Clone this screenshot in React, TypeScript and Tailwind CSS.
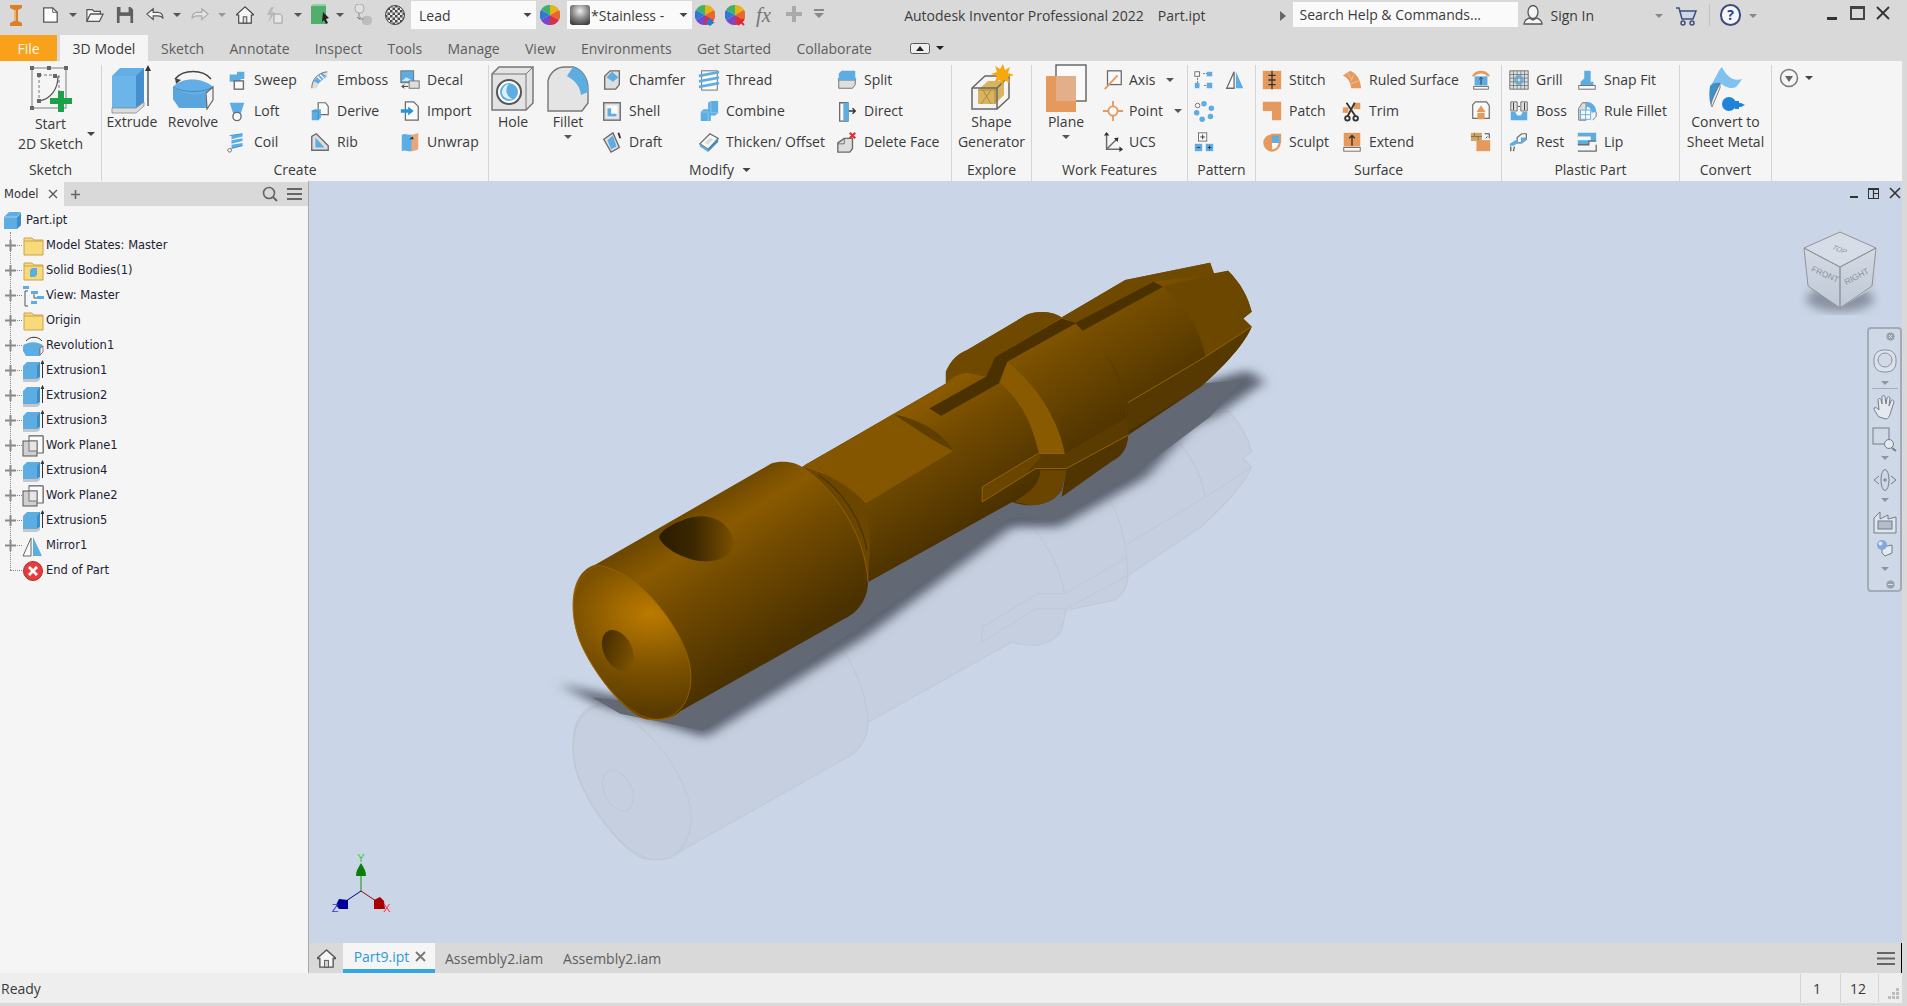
import React from 'react';

const B = '#5dade2', BD = '#3d8ec9', G = '#6b6b6b', LG = '#dedede', O = '#e5995c', W = '#fafafa', DK = '#333';

const ICONS: Record<string, React.ReactNode> = {
  sweep: <><path d="M4 6h8V3h8v8h-4v3H4z" fill={B} /><rect x="9" y="13" width="10" height="9" fill={W} stroke={G} strokeWidth="1.5" /></>,
  loft: <><path d="M4 3h16l-4 12H8z" fill={B} /><circle cx="12" cy="18" r="4.5" fill={W} stroke={G} strokeWidth="1.5" /></>,
  coil: <><path d="M6 5l12-2v3L6 9zM6 10l12-2v3L6 14zM6 15l12-2v3L6 19z" fill={B} /><path d="M4 5l14-2M6 19l12-3" stroke={BD} /><circle cx="4" cy="21" r="2" fill={W} stroke={G} /></>,
  emboss: <><path d="M3 21C3 11 10 4 20 3v6c-6 1-10 5-11 12z" fill={LG} /><path d="M5 13l9-9 5 4-9 8z" fill={B} /><path d="M9 8l4 4M12 6l4 4" stroke={W} strokeWidth="1.5" /><path d="M3 21C3 11 10 4 20 3" fill="none" stroke={G} /></>,
  derive: <><path d="M10 3h8l3 4v9H10z" fill={W} stroke={G} strokeWidth="1.3" /><path d="M3 12l3-2h7v9l-3 3H3z" fill={B} /><path d="M3 12h7v10" fill="none" stroke={BD} /></>,
  rib: <><path d="M3 21V6l5-3 13 13v5z" fill={LG} stroke={G} strokeWidth="1.5" /><path d="M7 18V7l10 11z" fill={B} /></>,
  decal: <><rect x="2" y="2" width="14" height="13" fill={B} stroke={G} /><path d="M3 13l5-4 7 4z" fill="#cfe7f7" /><rect x="11" y="13" width="11" height="8" fill={LG} stroke={G} /><path d="M3 19h7M6 17l-3 2 3 2" stroke={DK} fill="none" /></>,
  import: <><path d="M7 2h9l5 5v15H7z" fill={W} stroke={G} strokeWidth="1.4" /><path d="M2 10h8V7l6 5-6 5v-3H2z" fill="#2b93e0" /></>,
  unwrap: <><path d="M3 4c4-2 8 1 11 0v18c-4 1-7-2-11 0z" fill={B} /><path d="M14 4c2 0 5-1 7-2v18c-2 1-5 2-7 2z" fill="#e9a67a" /><path d="M11 9l4-3 1 3z" fill={DK} /></>,
  chamfer: <><path d="M4 8l6-6h10v15l-4 5H4z" fill={LG} stroke={G} strokeWidth="1.5" /><path d="M6 9l6-6 7 6-6 5z" fill={B} /></>,
  shell: <><rect x="3" y="3" width="18" height="19" fill={LG} stroke={G} strokeWidth="1.5" /><rect x="6" y="6" width="12" height="13" fill={W} /><path d="M7 9h4v6h6v3H7z" fill={B} /></>,
  draft: <><path d="M3 9l10-7 7 16-9 5z" fill={LG} stroke={G} strokeWidth="1.5" /><path d="M7 10l6-5 4 12-6 3z" fill={B} /><path d="M19 2l2 6" stroke={DK} strokeWidth="2" /></>,
  thread: <><rect x="4" y="2" width="17" height="21" fill={W} stroke={G} /><path d="M1 6l22-4v3L1 9zM1 12l22-4v3L1 15zM1 18l22-4v3L1 21z" fill={B} /></>,
  combine: <><path d="M3 13l3-3h5V3l3-2h8v13l-3 3h-5v6H3z" fill={B} /><path d="M14 1v13h8M3 13h8v10" fill="none" stroke="#8ccaf2" /></>,
  thicken: <><path d="M2 14L13 3l9 5-11 12z" fill={W} stroke={G} strokeWidth="1.4" /><path d="M2 14l9 6v3l-9-6z" fill={B} /><path d="M11 20L22 8v4L11 23z" fill={BD} /><path d="M7 13l6-6 4 2-6 6z" fill={LG} /></>,
  split: <><path d="M3 5l3-3h15v8H3z" fill={B} /><path d="M3 10h18v2H3z" fill={W} /><path d="M3 12h18v5l-3 4H3z" fill={LG} stroke={G} /><path d="M2 11h20" stroke={B} strokeWidth="2.5" /></>,
  direct: <><path d="M4 3h9v20H4z" fill={W} stroke={G} strokeWidth="1.4" /><path d="M8 3h6v20H8z" fill={B} /><path d="M14 12h6M18 9l3 3-3 3" stroke={DK} strokeWidth="1.5" fill="none" /></>,
  delete: <><path d="M2 13l7-5h9v11l-3 4H2z" fill={LG} stroke={G} strokeWidth="1.5" /><path d="M9 8v6H2" fill="none" stroke={G} /><path d="M15 2l6 6M21 2l-6 6" stroke="#e03030" strokeWidth="2.4" /></>,
  axis: <><rect x="6" y="2" width="15" height="15" fill={W} stroke={G} strokeWidth="1.4" /><path d="M3 22L17 7" stroke={O} strokeWidth="2" /></>,
  point: <><path d="M12 1v22M1 12h22" stroke={O} strokeWidth="2" /><circle cx="12" cy="12" r="5" fill={W} stroke={O} strokeWidth="2" /></>,
  ucs: <><path d="M5 3v17h16" fill="none" stroke={G} strokeWidth="1.6" /><path d="M5 20L16 9" stroke={G} strokeWidth="1.6" /><path d="M5 1l-3 4h6zM23 20l-4-3v6zM18 7l-5 1 4 4z" fill={DK} /></>,
  rectp: <><path d="M3 5h4M11 5h6M5 18h3M12 18h5M5 7v9" stroke={G} strokeDasharray="2 1" /><rect x="2" y="3" width="5" height="5" fill={W} stroke={G} /><rect x="15" y="3" width="6" height="5" fill={B} /><rect x="2" y="15" width="5" height="6" fill={B} /><rect x="15" y="15" width="6" height="6" fill={B} /></>,
  mirror: <><path d="M3 21L11 3v18z" fill={W} stroke={G} strokeWidth="1.4" /><path d="M13 3l8 18h-8z" fill={B} /></>,
  circp: <><circle cx="12" cy="4" r="3" fill={B} /><circle cx="20" cy="9" r="3" fill={B} /><circle cx="19" cy="18" r="3" fill={B} /><circle cx="10" cy="21" r="3" fill={B} /><circle cx="4" cy="14" r="3" fill={B} /><circle cx="5" cy="6" r="2.5" fill={W} stroke={G} /></>,
  skp: <><rect x="2" y="14" width="8" height="8" fill={B} /><rect x="14" y="14" width="8" height="8" fill={B} /><rect x="6" y="2" width="9" height="9" fill={W} stroke={G} /><path d="M8 6.500h5M10.500 4v5M4 18h4M18 16v4M16 18h4" stroke={DK} /></>,
  stitch: <><rect x="2" y="2" width="20" height="20" fill={O} /><path d="M12 2v20M8 7h8M8 12h8M8 17h8" stroke={DK} strokeWidth="1.4" /></>,
  patch: <><path d="M2 2h20v20H12V12H2z" fill={O} /></>,
  sculpt: <><circle cx="12" cy="13" r="9.500" fill={O} /><path d="M11 3h11v10H11z" fill={O} /><path d="M12 5h8v8h-8z" fill={B} /><path d="M12 13h7a7 7 0 0 1-7 7z" fill={W} /></>,
  ruled: <><path d="M2 7l8-5c7 3 11 9 12 19H11c0-6-3-11-9-14z" fill={O} /><path d="M7 4l5 8M14 6l-3 7M19 13l-8 3" stroke="#f2c5a0" /></>,
  trim: <><rect x="14" y="3" width="7" height="7" fill={O} /><rect x="2" y="8" width="6" height="6" fill={O} /><path d="M6 3l10 15M15 3L7 18" stroke={DK} strokeWidth="2" /><circle cx="7" cy="20" r="2.500" fill="none" stroke={DK} strokeWidth="2" /><circle cx="16" cy="20" r="2.500" fill="none" stroke={DK} strokeWidth="2" /></>,
  extend: <><rect x="3" y="2" width="18" height="15" fill={O} /><rect x="3" y="18" width="18" height="4" fill={W} stroke={G} /><path d="M12 16V6M9 8l3-3 3 3" stroke={DK} strokeWidth="1.5" fill="none" /></>,
  s1: <><path d="M2 8c2-4 6-6 10-6s8 2 10 6h-3c-2-2-4-3-7-3S7 6 5 8z" fill={O} /><rect x="5" y="8" width="14" height="10" fill={B} /><rect x="4" y="19" width="16" height="3" fill={W} stroke={G} /><path d="M12 17v-7M10 11l2-2 2 2" stroke={DK} fill="none" /></>,
  s2: <><path d="M3 5l3-3h12l3 4v14H3z" fill={W} stroke={G} strokeWidth="1.3" /><path d="M7 13l5-7 5 7z" fill={O} /><rect x="8" y="14" width="8" height="7" fill={O} /></>,
  s3: <><rect x="1" y="2" width="12" height="9" fill="#c9a86a" /><path d="M1 6h12M5 2v4M9 6v5" stroke="#8a6f3c" /><rect x="7" y="10" width="15" height="12" fill={O} /><path d="M16 3h5v5M19 6l-2 2" stroke={DK} fill="none" /></>,
  grill: <><rect x="2" y="2" width="20" height="20" fill={LG} stroke={G} /><path d="M6 2v20M10 2v20M14 2v20M18 2v20M2 6h20M2 10h20M2 14h20M2 18h20" stroke={G} strokeWidth=".8" /><circle cx="12" cy="12" r="4" fill="none" stroke={B} strokeWidth="2.500" /></>,
  boss: <><path d="M3 2h7v10H3zM14 2h7v10h-7z" fill={LG} stroke={G} /><path d="M6 3v8M18 3v8M11 7h2" stroke={DK} /><path d="M3 13h5l2 4h4l2-4h5v9H3z" fill={B} /></>,
  rest: <><path d="M10 7l5-4h5v6l-5 4h-5z" fill="none" stroke={G} strokeWidth="1.3" /><path d="M14 7h6v2l-4 4h-2z" fill={B} /><path d="M2 14l6-4h3v3l-5 3H2z" fill={B} /><path d="M3 17v5M7 17l-1 5" stroke={G} strokeWidth="1.500" /></>,
  snap: <><path d="M9 2h7v12h3v4H5v-4l4-4z" fill={B} /><rect x="3" y="18" width="18" height="4" fill={W} stroke={G} /></>,
  rulef: <><path d="M3 9l4-6h4v19H3z" fill={LG} stroke={G} /><path d="M11 2c6 0 11 4 11 11l-5 1c0-4-3-7-6-7z" fill={B} /><rect x="5" y="11" width="11" height="10" fill={W} stroke={B} /><path d="M5 16h11M10.500 11v10" stroke={B} /><path d="M22 13v5l-4 4" stroke={G} fill="none" /></>,
  lip: <><path d="M2 2h20v9h-8v4H2V2z" fill={B} /><path d="M2 6h14v4H2z" fill={W} /><path d="M2 15h12v-4h8M2 22h20v-7" stroke={G} strokeWidth="1.400" fill="none" /></>,
};

const Ic = ({ n, s = 22 }: { n: string; s?: number }) => (
  <svg width={s} height={s} viewBox="0 0 24 24" className="shrink-0">{ICONS[n]}</svg>
);

const Tri = ({ c = '#555', w = 8 }: { c?: string; w?: number }) => (
  <svg width={w} height="6" viewBox="0 0 8 6" className="shrink-0"><path d="M0 1h8L4 5z" fill={c} /></svg>
);

type Item = { i: string; t?: string; dd?: string };

const Col = ({ w, items, gap = 'gap-[6px]' }: { w: string; items: Item[]; gap?: string }) => (
  <div className={`-mt-[1px] flex flex-col shrink-0 ${w}`}>
    {items.map((it, k) => (
      <div key={k} className={`flex h-[31px] items-center whitespace-nowrap ${gap}`}>
        <Ic n={it.i} />
        {it.t && <span>{it.t}</span>}
        {it.dd && <span className={it.dd}><Tri /></span>}
      </div>
    ))}
  </div>
);

const Big = ({ w, icon, label, dd, iconBox = 'h-[47px]' }: { w: string; icon: React.ReactNode; label: React.ReactNode; dd?: boolean; iconBox?: string }) => (
  <div className={`flex flex-col items-center shrink-0 ${w}`}>
    <div className={`flex items-center justify-center ${iconBox}`}>{icon}</div>
    <div className="text-center leading-[20px] whitespace-nowrap">{label}</div>
    {dd && <div className="mt-[2px]"><Tri /></div>}
  </div>
);

const Group = ({ w, label, children, labelExtra }: { w: string; label: string; children: React.ReactNode; labelExtra?: React.ReactNode }) => (
  <div className={`flex flex-col shrink-0 border-r border-[#d4d4d4] ${w}`}>
    <div className="flex h-[95px]">{children}</div>
    <div className="flex h-[20px] items-center justify-center gap-[8px] leading-[20px]">{label}{labelExtra}</div>
  </div>
);

const ExtrudeIcon = () => (
  <svg width="44" height="50" viewBox="0 0 44 50">
    <path d="M2 12L10 4h24v34l-8 6H2z" fill="#63aee6" />
    <path d="M26 12l8-8v34l-8 6z" fill="#4590cc" />
    <path d="M2 12h24v32H2z" fill="#6cb5ea" />
    <path d="M2 44h24l8-6v4l-8 7H2z" fill="#dcdcdc" stroke="#888" strokeWidth=".8" />
    <path d="M38 42V5" stroke="#333" strokeWidth="1.2" />
    <path d="M38 1l-3 6h6z" fill="#333" />
  </svg>
);
const RevolveIcon = () => (
  <svg width="44" height="44" viewBox="0 0 44 44">
    <path d="M4 12C12 2 32 2 40 12" fill="none" stroke="#444" strokeWidth="1.300" />
    <path d="M4 11l1 6 5-4z" fill="#444" />
    <path d="M2 20C10 10 32 10 42 20v12l-6 9H8L2 32z" fill="#63aee6" />
    <path d="M2 20C12 26 32 26 42 20" fill="none" stroke="#3d8ec9" />
    <path d="M35 26l7-6v13l-6 9z" fill="#f3f3f3" stroke="#666" strokeWidth="1.200" />
    <path d="M2 32c3 4 5 7 8 9h24c1-3 1-10 1-15-10 3-24 2-33-6z" fill="#5aa5dd" />
  </svg>
);
const SketchIcon = () => (
  <svg width="44" height="50" viewBox="0 0 44 50">
    <rect x="3" y="3" width="34" height="40" fill="none" stroke="#999" strokeWidth="1.300" />
    <path d="M10 10v28M10 10h20v18" fill="none" stroke="#777" strokeDasharray="3 2" />
    <path d="M10 36C22 34 29 24 29 11" fill="none" stroke="#555" strokeWidth="1.200" />
    {[[3, 3], [37, 3], [3, 43], [20, 3], [10, 10], [26, 11], [10, 36]].map(([x, y], i) => <rect key={i} x={x - 2} y={y - 2} width="4" height="4" fill="#666" />)}
    <path d="M29 27h6v7h8v6h-8v8h-6v-8h-8v-6h8z" fill="#1aa14a" transform="translate(0,-1)" />
  </svg>
);
const HoleIcon = () => (
  <svg width="44" height="46" viewBox="0 0 44 46">
    <path d="M1 8l7-7h34v36l-7 7H1z" fill="#e3e3e3" stroke="#777" strokeWidth="1.500" />
    <path d="M1 8h34v36M35 8l7-7" fill="none" stroke="#777" />
    <circle cx="18" cy="26" r="12" fill="#fff" stroke="#555" strokeWidth="2" />
    <circle cx="18" cy="26" r="9" fill="#5dade2" />
    <path d="M11 26a8 8 0 0 1 7-8 9 9 0 0 0 4 15c-6 1-11-2-11-7z" fill="#dff0fb" />
  </svg>
);
const FilletIcon = () => (
  <svg width="42" height="46" viewBox="0 0 42 46">
    <path d="M1 15C3 6 10 1 18 1h8c8 2 15 10 15 22v14l-6 8H1z" fill="#e4e4e4" stroke="#777" strokeWidth="1.400" />
    <path d="M26 1c8 2 15 10 15 22v3l-7 3c-1-8-5-14-14-19z" fill="#5dade2" />
  </svg>
);
const ShapeIcon = () => (
  <svg width="46" height="50" viewBox="0 0 46 50">
    <path d="M3 24L16 12h24v22L28 45H3z" fill="#f4f4f4" stroke="#666" strokeWidth="1.500" />
    <path d="M9 26l10-9h16v14l-9 9H9z" fill="#d9b45c" />
    <path d="M9 26h17v14M26 26l9-9M14 26l8 14M22 26l-10 14" stroke="#a98a3f" fill="none" />
    <path d="M3 24h25v21M28 24l12-12" fill="none" stroke="#666" strokeWidth="1.500" />
    <path d="M34 0l2 6 5-3-2 6 6 2-6 2 2 6-6-3-2 5-2-5-5 2 2-6-6-2 6-2-2-6 5 3z" fill="#f5a90f" />
  </svg>
);
const PlaneIcon = () => (
  <svg width="42" height="50" viewBox="0 0 42 50">
    <rect x="11" y="1" width="30" height="36" fill="#fafafa" stroke="#555" strokeWidth="1.300" />
    <rect x="1" y="12" width="30" height="36" fill="#e5995c" />
    <rect x="11" y="12" width="20" height="25" fill="#e2af8a" />
  </svg>
);
const ConvertIcon = () => (
  <svg width="42" height="46" viewBox="0 0 42 46">
    <path d="M5 20C10 15 13 4 17 1c4 8 10 15 20 12-2 3-4 6-6 8-6 3-12-1-16-4z" fill="#7fc2f0" />
    <path d="M5 20c3-3 6-4 10-3 0 6-3 12-9 22-2-4-2-13-1-19z" fill="#3f8fcb" />
    <path d="M6 39c1-7 6-15 9-22v5L7 41z" fill="#eee" stroke="#666" strokeWidth=".8" />
    <circle cx="24" cy="38" r="7" fill="#1f84d9" />
    <path d="M30 35h4v2h2l4 2-4 2h-2v2h-4z" fill="#1f84d9" />
  </svg>
);

const T = ({ children, w = 18 }: { children: React.ReactNode; w?: number }) => (
  <svg width={w} height="20" viewBox="0 0 20 20" className="shrink-0">{children}</svg>
);
const Wheel = ({ mark }: { mark?: 'b' | 'x' }) => (
  <svg width="20" height="22" viewBox="0 0 20 22" className="shrink-0">
    <path d="M10 11V1a10 10 0 0 1 9 5z" fill="#e7b416" />
    <path d="M10 11l9-5a10 10 0 0 1 0 10z" fill="#e8682a" />
    <path d="M10 11l9 5a10 10 0 0 1-9 5z" fill="#d62f4a" />
    <path d="M10 11v10a10 10 0 0 1-9-5z" fill="#7a46c9" />
    <path d="M10 11l-9 5a10 10 0 0 1 0-10z" fill="#2f78d8" />
    <path d="M10 11L1 6a10 10 0 0 1 9-5z" fill="#3fb26a" />
    {mark === 'b' && <path d="M13 15h4v3h3l-5 4-5-4h3z" fill="#1c7fd1" />}
    {mark === 'x' && <path d="M13 15l6 6M19 15l-6 6" stroke="#e02a2a" strokeWidth="2" />}
  </svg>
);

const tree: [string, string][] = [
  ['folder', 'Model States: Master'],
  ['fcube', 'Solid Bodies(1)'],
  ['view', 'View: Master'],
  ['folder', 'Origin'],
  ['rev', 'Revolution1'],
  ['ext', 'Extrusion1'],
  ['ext', 'Extrusion2'],
  ['ext', 'Extrusion3'],
  ['wp', 'Work Plane1'],
  ['ext', 'Extrusion4'],
  ['wp', 'Work Plane2'],
  ['ext', 'Extrusion5'],
  ['mir', 'Mirror1'],
  ['end', 'End of Part'],
];

const TreeIcon = ({ k }: { k: string }) => {
  const box = (c: React.ReactNode) => <svg width="22" height="22" viewBox="0 0 22 22" className="shrink-0">{c}</svg>;
  if (k === 'folder' || k === 'fcube') return box(<>
    <path d="M2 3h8l2 2h9v15H2z" fill="#f9da7a" stroke="#c9a24e" />
    <path d="M2 6h19" stroke="#c9a24e" />
    {k === 'fcube' && <path d="M8 10l2-2h5v7l-2 2H8z" fill="#5dade2" />}
  </>);
  if (k === 'view') return box(<>
    <path d="M3 6v15h3M3 6h3" fill="none" stroke="#555" />
    <rect x="1" y="1" width="6" height="3" fill="#5dade2" /><rect x="9" y="6" width="7" height="3" fill="#5dade2" /><rect x="15" y="11" width="7" height="3" fill="#5dade2" /><rect x="9" y="16" width="6" height="3" fill="#5dade2" />
    <path d="M12 9v4h3" fill="none" stroke="#555" />
  </>);
  if (k === 'rev') return box(<>
    <path d="M4 6C8 1 16 1 20 6" fill="none" stroke="#333" />
    <path d="M1 11C5 6 17 6 21 11v5l-3 5H4l-3-5z" fill="#5dade2" />
    <path d="M18 13l3-2v6l-3 3z" fill="#eee" stroke="#555" strokeWidth=".7" />
  </>);
  if (k === 'ext') return box(<>
    <path d="M1 6l4-4h13v15l-3 2H1z" fill="#5dade2" />
    <path d="M15 6l3-4v15l-3 2z" fill="#3d8ec9" />
    <path d="M1 19h14l3-2v3l-3 2H1z" fill="#c7c7c7" />
    <path d="M20.500 18V3" stroke="#333" strokeWidth="1" /><path d="M20.500 0l-2 4h4z" fill="#333" />
  </>);
  if (k === 'wp') return box(<>
    <path d="M7 1h14v17" fill="none" stroke="#444" strokeWidth="1" /><rect x="7" y="1" width="14" height="17" fill="#fafafa" stroke="#666" />
    <rect x="1" y="6" width="14" height="15" fill="#cfcfcf" stroke="#555" />
    <rect x="7" y="6" width="8" height="10" fill="#e6e6e6" stroke="#777" />
  </>);
  if (k === 'mir') return box(<>
    <path d="M1 21l8-18v18z" fill="#fafafa" stroke="#666" /><path d="M11 2l9 19h-9z" fill="#5dade2" />
  </>);
  return box(<>
    <circle cx="11" cy="11" r="9.500" fill="#e43d3d" stroke="#b52a2a" />
    <path d="M7 7l8 8M15 7l-8 8" stroke="#fff" strokeWidth="2.800" />
  </>);
};

const SIL = 'M115,975 L490,670 C510,660 540,665 555,680 L860,430 L860,395 C870,365 880,345 905,330 L1030,225 C1050,212 1085,212 1105,232 L1240,120 L1420,68 L1428,100 L1458,92 C1485,130 1500,170 1508,215 L1490,235 L1508,260 C1490,320 1440,390 1400,440 L1246,585 C1245,620 1235,645 1215,660 L1115,690 L1105,750 C1095,775 1070,795 1040,795 C1025,795 1010,790 1000,785 L695,1025 C695,1080 670,1120 645,1135 L300,1410 C280,1435 255,1440 235,1437 C190,1440 120,1310 90,1220 C60,1130 60,1000 115,975 Z';

const PartDrawing = () => (
  <svg width="740" height="634" viewBox="0 0 1568 1900" preserveAspectRatio="none" className="absolute left-[231px] top-[59px]">
    <defs>
      <linearGradient id="cyl" gradientUnits="userSpaceOnUse" x1="300" y1="825" x2="591" y2="1151">
        <stop offset="0" stopColor="#6e4800" /><stop offset=".2" stopColor="#8a5a00" /><stop offset=".45" stopColor="#734b00" /><stop offset="1" stopColor="#4a3100" />
      </linearGradient>
      <linearGradient id="cylB" gradientUnits="userSpaceOnUse" x1="870" y1="200" x2="1200" y2="570">
        <stop offset="0" stopColor="#6e4800" /><stop offset=".3" stopColor="#8a5a00" /><stop offset=".55" stopColor="#744c00" /><stop offset="1" stopColor="#503500" />
      </linearGradient>
      <radialGradient id="face" gradientUnits="userSpaceOnUse" cx="235" cy="1120" r="300">
        <stop offset="0" stopColor="#bd7b00" /><stop offset=".55" stopColor="#7d5200" /><stop offset="1" stopColor="#583a00" />
      </radialGradient>
      <linearGradient id="hole" x1="0" x2="1" y1="0" y2="0">
        <stop offset="0" stopColor="#2b1c00" /><stop offset=".45" stopColor="#3a2600" /><stop offset="1" stopColor="#7a5000" />
      </linearGradient>
      <linearGradient id="hole2" x1="0" x2="1" y1="0" y2="1">
        <stop offset="0" stopColor="#3a2600" /><stop offset="1" stopColor="#8a5a00" />
      </linearGradient>
      <filter id="soft" x="-10%" y="-10%" width="120%" height="120%"><feGaussianBlur stdDeviation="14" /></filter>
    </defs>

    <g transform="translate(0,420)" fill="none" stroke="#c0c7d4" strokeWidth="2.500">
      <path d={SIL} fill="#c5cfdf" />
      <path d="M125,975 C60,1000 60,1130 90,1220 C120,1310 190,1440 250,1437 C310,1430 330,1340 315,1260 C300,1170 220,1000 125,975" />
      <ellipse cx="165" cy="1230" rx="30" ry="62" transform="rotate(-14 165 1230)" />
      <path d="M555,680 C620,740 690,880 695,1025" />
      <path d="M1160,270 C1210,340 1245,440 1245,590" />
      <path d="M990,365 C1050,430 1100,540 1112,640 L1245,530" />
      <path d="M937,740 L1055,640 L1112,640 M937,740 L937,785 L1050,685 L1115,685 L1246,585 M1245,490 L1410,350 L1508,260" />
      <path d="M1320,140 C1370,200 1400,270 1410,350" />
    </g>

    <path d="M40,1330 L300,1410 L640,1130 L695,1020 L1000,780 L1400,430 L1500,390 L1535,425 L1440,520 L1380,560 L1285,710 L1100,860 L1000,860 L690,1190 L350,1490 L120,1390 Z" fill="#5c6270" filter="url(#soft)" />
    <path d="M110,1370 L300,1400 L640,1120 L690,1010 L1000,770 L1400,430 L1490,420 L1420,530 L1260,700 L1090,840 L1000,830 L680,1160 L345,1470 L170,1420 Z" fill="#626874" />

    <path d={SIL} fill="url(#cyl)" />
    <path d="M555,680 L860,430 L975,430 L1040,530 L1058,640 L1060,690 L1050,735 L1000,785 L695,1025 C695,900 620,740 555,680 Z" fill="url(#cyl)" />
    <path d="M560,675 L750,522 L876,632 L690,790 C660,740 620,700 560,675 Z" fill="#845600" />
    <path d="M750,522 C810,540 855,580 876,632 C830,600 790,560 750,522 Z" fill="#5f3f00" />
    <path d="M555,680 C620,700 660,750 690,790 L700,900 L695,1025 C690,900 640,760 555,680 Z" fill="#6b4600" />
    <path d="M590,705 C635,745 680,830 693,930" fill="none" stroke="#4e3400" strokeWidth="3" />
    <path d="M555,680 C620,740 690,880 695,1025" fill="none" stroke="#9a6500" strokeWidth="2" />
    <path d="M860,430 L860,395 C870,365 880,345 905,330 L1030,225 C1050,212 1085,212 1105,232 L965,350 L945,410 L905,398 C885,400 870,415 860,430 Z" fill="#6f4900" />
    <path d="M990,365 L1135,250 C1200,330 1245,440 1246,585 L1115,690 L1112,640 C1100,540 1050,430 990,365 Z" fill="url(#cylB)" />
    <path d="M975,430 L990,365 C1050,430 1100,540 1112,640 L1057,640 C1045,560 1020,480 975,430 Z" fill="#8a5a00" />
    <path d="M1060,690 L1115,690 L1105,750 C1095,775 1070,795 1040,795 L1005,785 L1040,750 C1050,735 1060,715 1060,690 Z" fill="#6a4500" />
    <path d="M1115,690 L1246,585 C1245,620 1235,645 1215,660 L1105,770 Z" fill="#503500" />
    <path d="M1057,640 L1112,640 L1115,685 L1050,685 L1000,730 L937,785 L937,740 Z" fill="#6a4500" />
    <path d="M1055,640 L1112,640 L1245,530 L1245,585 L1115,685 L1050,685 L1030,700 L1062,650 Z" fill="#5a3c00" />
    <path d="M1057,640 L1112,640 M937,740 L1055,640 M937,740 L937,785 L1050,685 L1115,685 L1246,585" fill="none" stroke="#a26c08" strokeWidth="2" />
    <path d="M1160,270 C1210,340 1245,440 1246,585" fill="none" stroke="#5a3c00" strokeWidth="3" />
    <path d="M1150,270 L1320,140 C1370,200 1400,270 1410,350 L1245,488 C1240,420 1205,335 1150,270 Z" fill="url(#cylB)" />
    <path d="M1320,140 L1458,92 C1485,130 1500,170 1508,215 L1490,235 L1508,260 L1410,350 C1400,270 1370,200 1320,140 Z" fill="#6c4700" />
    <path d="M1245,490 L1410,352 L1508,260 C1490,320 1440,390 1400,440 L1246,575 Z" fill="#563900" />
    <path d="M1245,488 L1410,350 L1508,260" fill="none" stroke="#a26c08" strokeWidth="2" />
    <path d="M1105,232 L1240,120 L1420,68 L1428,100 L1300,125 L1135,248 Z" fill="#6f4900" />
    <path d="M825,505 L945,410 L965,350 L1105,235 L1135,248 L1300,125 L1320,140 L1150,272 L1135,250 L990,365 L972,430 L850,527 Z" fill="#4b3100" />
    <path d="M340,828 C380,825 410,870 410,905 C410,945 380,965 345,963 C310,960 260,925 252,890 C260,860 310,830 340,828 Z" fill="url(#hole)" />
    <path d="M125,975 C60,1000 60,1130 90,1220 C120,1310 190,1440 250,1437 C310,1430 330,1340 315,1260 C300,1170 220,1000 125,975 Z" fill="url(#face)" stroke="#9a6500" strokeWidth="2" />
    <ellipse cx="165" cy="1230" rx="31" ry="63" transform="rotate(-14 165 1230)" fill="url(#hole2)" />
    <path d="M115,975 C60,1000 60,1130 90,1220 C120,1310 190,1440 235,1437 C270,1440 285,1430 300,1410" fill="none" stroke="#9a6500" strokeWidth="2" />
  </svg>
);

const Cube = () => (
  <svg width="90" height="100" viewBox="0 0 90 100" className="absolute left-[1486px] top-[46px]">
    <defs>
      <linearGradient id="cf" x1="0" x2="0" y1="0" y2="1"><stop offset="0" stopColor="#d9dfe8" /><stop offset="1" stopColor="#bfc8d6" /></linearGradient>
      <filter id="cs"><feGaussianBlur stdDeviation="5" /></filter>
    </defs>
    <ellipse cx="45" cy="72" rx="34" ry="13" fill="#8a93a3" filter="url(#cs)" />
    <path d="M45 5L81 21V59L45 81L13 59L9 21Z" fill="url(#cf)" />
    <path d="M45 5L81 21L45 40L9 21Z" fill="#d7dde6" />
    <path d="M9 21L45 40V81L13 59ZM81 21L77 59L45 81V40Z" fill="none" stroke="#8f949c" />
    <path d="M45 5L81 21L45 40L9 21Z" fill="none" stroke="#8f949c" />
    <text x="45" y="25" textAnchor="middle" fontSize="7" fill="#8d939c" fontFamily="Liberation Sans" transform="rotate(22 45 22) skewX(-20)" dx="8">TOP</text>
    <text x="29" y="50" textAnchor="middle" fontSize="8.500" fill="#8d939c" fontFamily="Liberation Sans" transform="rotate(24 29 50)">FRONT</text>
    <text x="63" y="52" textAnchor="middle" fontSize="8.500" fill="#8d939c" fontFamily="Liberation Sans" transform="rotate(-28 63 52)">RIGHT</text>
  </svg>
);

const NavBar = () => (
  <div className="absolute left-[1558px] top-[146px] flex h-[265px] w-[35px] flex-col items-center rounded-[4px] border-2 border-[#a3abb8] bg-[#ced8e6]">
    <div className="mt-[1px] flex h-[12px] w-full items-center justify-end pr-[5px]">
      <svg width="9" height="9" viewBox="0 0 9 9"><circle cx="4.500" cy="4.500" r="4" fill="#9aa0aa" /><path d="M3 3l3 3M6 3L3 6" stroke="#dde" /></svg>
    </div>
    <svg width="24" height="24" viewBox="0 0 24 24" className="mt-[7px]"><rect x="1" y="1" width="22" height="22" rx="9" fill="#dbe2ec" stroke="#8c929c" /><circle cx="12" cy="11" r="7" fill="#d2dae6" stroke="#8c929c" /></svg>
    <div className="mt-[7px]"><Tri c="#8f959e" /></div>
    <div className="mt-[2px] h-px w-[26px] bg-[#a3abb8]" />
    <svg width="24" height="25" viewBox="0 0 24 25" className="mt-[6px]"><path d="M6 22C3 18 1 15 1 13c2-1 3 0 5 2L5 5c0-2 3-2 3 0l1 4V2c0-2 3-2 3 0l1 7 1-6c1-2 3-1 3 0l-1 8 2-5c1-2 3-1 3 1l-3 9c-1 5-3 8-5 8z" fill="#e4e9f0" stroke="#777d87" /></svg>
    <svg width="25" height="25" viewBox="0 0 25 25" className="mt-[7px]"><rect x="1" y="1" width="16" height="16" fill="none" stroke="#777d87" /><circle cx="17" cy="17" r="4.500" fill="#e4e9f0" stroke="#777d87" /><path d="M20 21l4 3" stroke="#777d87" strokeWidth="2" /></svg>
    <div className="mt-[3px]"><Tri c="#8f959e" /></div>
    <svg width="24" height="24" viewBox="0 0 24 24" className="mt-[7px]"><ellipse cx="12" cy="12" rx="4" ry="10.500" fill="none" stroke="#777d87" /><path d="M6 8l-5 4 5 4M18 8l5 4-5 4M10 12h4M12 10v4" fill="none" stroke="#777d87" /></svg>
    <div className="mt-[5px]"><Tri c="#8f959e" /></div>
    <svg width="24" height="24" viewBox="0 0 24 24" className="mt-[7px]"><path d="M1 8V23H23V7L15 9V5L7 9V2z" fill="#dfe5ee" stroke="#777d87" /><rect x="5" y="11" width="14" height="8" fill="#b5bcc8" stroke="#777d87" /></svg>
    <svg width="18" height="18" viewBox="0 0 18 18" className="mt-[5px]"><path d="M6 8l10-2v8l-7 3-3-3z" fill="#e4e9f0" stroke="#777d87" /><circle cx="6" cy="6" r="5" fill="#86a7dc" /><circle cx="4.500" cy="4.500" r="2" fill="#dbe7f8" /></svg>
    <div className="mt-[9px]"><Tri c="#8f959e" /></div>
    <div className="mt-[8px] flex w-full justify-end pr-[5px]">
      <svg width="9" height="9" viewBox="0 0 9 9"><circle cx="4.500" cy="4.500" r="4" fill="#9aa0aa" /><path d="M2 4.500h5" stroke="#dde" /></svg>
    </div>
  </div>
);

const Triad = () => (
  <svg width="66" height="68" viewBox="0 -6 66 68" className="absolute left-[21px] top-[668px]">
    <path d="M31 36V12" stroke="#0a9a0a" />
    <path d="M31 8c-3 5-5 8-5 13h10c0-5-2-8-5-13z" fill="#0a7d0a" />
    <path d="M31 36L13 48" stroke="#000080" />
    <path d="M9 44l9 1 0 9H9l-3-4z" fill="#000098" />
    <path d="M31 36l15 10" stroke="#a00000" />
    <path d="M44 45l6-3 4 4 1 8H44z" fill="#a80000" />
    <text x="31" y="7" textAnchor="middle" fontSize="11" fill="#2fd02f" fontFamily="Liberation Sans">Y</text>
    <text x="5" y="57" textAnchor="middle" fontSize="11" fill="#3a3ae0" fontFamily="Liberation Sans">Z</text>
    <text x="57" y="57" textAnchor="middle" fontSize="11" fill="#f03a4a" fontFamily="Liberation Sans">X</text>
  </svg>
);

export default function App() {
  return (
    <div className="relative flex h-[1006px] w-[1907px] flex-col overflow-hidden bg-[#d9d9d9] font-['Open_Sans',sans-serif] text-[14px] text-[#3a3a3a]">
      <div className="flex h-[35px] shrink-0 items-start whitespace-nowrap">
        <div className="ml-[10px] mt-[5px]"><svg width="12" height="21" viewBox="0 0 12 21"><path d="M0 0h12v3L8 5v11l4 2v3H0v-3l4-2V5L0 3z" fill="#d9812c" /><path d="M4 5h2v11H4z" fill="#f2b267" /></svg></div>
        <div className="ml-[19px] mt-[5px]"><T><path d="M3 2h10l5 5v11H3z" fill="#fdfdfd" stroke="#555" strokeWidth="1.400" /><path d="M13 2v5h5" fill="none" stroke="#555" /></T></div>
        <div className="ml-[10px] mt-[12px]"><Tri /></div>
        <div className="ml-[9px] mt-[5px]"><T><path d="M1 4h6l2 2h7v3H5L1 17z" fill="#f5f5f5" stroke="#555" strokeWidth="1.300" /><path d="M5 9h14l-4 8H1z" fill="#f5f5f5" stroke="#555" strokeWidth="1.300" /></T></div>
        <div className="ml-[12px] mt-[5px]"><T><path d="M1 1h15l3 3v15H1z" fill="#5f5f5f" /><rect x="5" y="1" width="9" height="6" fill="#d9d9d9" /><rect x="4" y="11" width="12" height="8" fill="#d9d9d9" /></T></div>
        <div className="ml-[12px] mt-[5px]"><T><path d="M8 3L1 9l7 6v-4h5c3 0 5 1 6 3 0-5-3-7-6-7H8z" fill="#f3f3f3" stroke="#555" strokeWidth="1.300" /></T></div>
        <div className="ml-[9px] mt-[12px]"><Tri /></div>
        <div className="ml-[10px] mt-[5px]"><T><path d="M12 3l7 6-7 6v-4H7c-3 0-5 1-6 3 0-5 3-7 6-7h5z" fill="#e4e4e4" stroke="#aaa" strokeWidth="1.300" /></T></div>
        <div className="ml-[9px] mt-[12px]"><Tri c="#999" /></div>
        <div className="ml-[10px] mt-[5px]"><T><path d="M10 1L0 10h3v9h14v-9h3z" fill="#f5f5f5" stroke="#444" strokeWidth="1.300" /><rect x="8" y="12" width="4" height="7" fill="#d9d9d9" stroke="#444" /></T></div>
        <div className="ml-[11px] mt-[5px]"><T><path d="M7 1L2 10h4l-2 8 7-11H7l3-6z" fill="#b9b9b9" /><path d="M10 9h7l2 2v8h-9z" fill="#e6e6e6" stroke="#999" /></T></div>
        <div className="ml-[11px] mt-[12px]"><Tri /></div>
        <div className="ml-[8px] mt-[5px]"><svg width="20" height="23" viewBox="0 0 20 23" className="-mt-[2px]"><path d="M1 3h15v18H1z" fill="#53ae6b" /><path d="M1 3h15V1H3z" fill="#8ed39f" /><path d="M13 9l6 6-3 1 2 4-2 1-2-4-2 2z" fill="#222" /></svg></div>
        <div className="ml-[6px] mt-[12px]"><Tri /></div>
        <div className="ml-[10px] mt-[4px]"><svg width="18" height="22" viewBox="0 0 18 22"><rect x="1" y="0" width="9" height="9" rx="4" fill="#e0e0e0" stroke="#aaa" /><rect x="8" y="12" width="10" height="9" rx="4" fill="#bdbdbd" /><path d="M5 9v6h5M3 13l2 2 2-2" stroke="#888" fill="none" /></svg></div>
        <div className="ml-[13px] mt-[5px]"><svg width="20" height="20" viewBox="0 0 20 20"><defs><pattern id="chk" width="5" height="5" patternUnits="userSpaceOnUse"><rect width="5" height="5" fill="#e8e8e8" /><rect width="2.500" height="2.500" fill="#4a4a4a" /><rect x="2.500" y="2.500" width="2.500" height="2.500" fill="#4a4a4a" /></pattern></defs><circle cx="10" cy="10" r="9.500" fill="url(#chk)" stroke="#444" /></svg></div>
        <div className="ml-[6px] mt-[1px] flex h-[28px] w-[125px] items-center justify-between bg-[#fafafa] pl-[8px] pr-[4px]"><span>Lead</span><Tri c="#444" w={9} /></div>
        <div className="ml-[4px] mt-[4px]"><Wheel /></div>
        <div className="ml-[7px] mt-[1px] flex h-[28px] w-[125px] items-center justify-between bg-[#fafafa] pl-[3px] pr-[4px]">
          <span className="flex items-center gap-[1px]"><svg width="20" height="20" viewBox="0 0 20 20"><defs><radialGradient id="met" cx=".5" cy=".3" r=".8"><stop offset="0" stopColor="#eee" /><stop offset=".5" stopColor="#888" /><stop offset="1" stopColor="#333" /></radialGradient></defs><rect width="20" height="20" rx="3" fill="url(#met)" /></svg>*Stainless -</span>
          <Tri c="#444" w={9} />
        </div>
        <div className="ml-[3px] mt-[4px]"><Wheel mark="b" /></div>
        <div className="ml-[10px] mt-[4px]"><Wheel mark="x" /></div>
        <div className="ml-[11px] mt-[1px] font-['Liberation_Serif',serif] text-[21px] italic leading-[28px] text-[#777]">fx</div>
        <div className="ml-[15px] mt-[6px]"><svg width="16" height="16" viewBox="0 0 16 16"><path d="M6 0h4v6h6v4h-6v6H6v-6H0V6h6z" fill="#aaa" /></svg></div>
        <div className="ml-[12px] mt-[8px]"><svg width="10" height="10" viewBox="0 0 10 10"><path d="M0 1h10v2H0zM0 5h10L5 10z" fill="#888" /></svg></div>
        <div className="ml-[80px] mt-[5px] text-[#3c3c3c]">Autodesk Inventor Professional 2022</div>
        <div className="ml-[14px] mt-[5px] text-[#3c3c3c]">Part.ipt</div>
        <div className="ml-[75px] mt-[11px]"><svg width="6" height="10" viewBox="0 0 6 10"><path d="M0 0l6 5-6 5z" fill="#666" /></svg></div>
        <div className="ml-[7px] mt-[2px] flex h-[25px] w-[225px] items-center bg-[#fafafa] pl-[6px]">Search Help &amp; Commands...</div>
        <div className="ml-[5px] mt-[5px]"><svg width="20" height="20" viewBox="0 0 20 20"><ellipse cx="10" cy="7" rx="5" ry="6.500" fill="#f4f4f4" stroke="#555" strokeWidth="1.300" /><path d="M6 13c-2 1-5 2-5 6h18c0-4-3-5-5-6l-4 2z" fill="#f4f4f4" stroke="#555" strokeWidth="1.300" /></svg></div>
        <div className="ml-[7px] mt-[5px]">Sign In</div>
        <div className="ml-[61px] mt-[13px]"><Tri c="#888" /></div>
        <div className="ml-[12px] mt-[5px]"><svg width="22" height="22" viewBox="0 0 22 22"><path d="M1 3h3l3 11h11l3-8H5" fill="#cfd6e8" stroke="#3f4f7a" strokeWidth="1.500" /><circle cx="8" cy="18" r="2" fill="none" stroke="#3f4f7a" strokeWidth="1.500" /><circle cx="17" cy="18" r="2" fill="none" stroke="#3f4f7a" strokeWidth="1.500" /></svg></div>
        <div className="ml-[12px] mt-[4px] h-[22px] w-px bg-[#c2c2c2]" />
        <div className="ml-[10px] mt-[4px] flex h-[22px] w-[21px] items-center justify-center rounded-full border-2 border-[#3a4a7a] bg-[#f4f6fb] text-[14px] font-bold leading-none text-[#27408b]">?</div>
        <div className="ml-[8px] mt-[13px]"><Tri c="#888" /></div>
        <div className="ml-[70px] mt-[17px] h-[3px] w-[10px] bg-[#333]" />
        <div className="ml-[13px] mt-[6px] h-[14px] w-[15px] border-2 border-t-[3px] border-[#444]" />
        <div className="ml-[11px] mt-[6px]"><svg width="14" height="14" viewBox="0 0 14 14"><path d="M1 1l12 12M13 1L1 13" stroke="#333" strokeWidth="1.800" /></svg></div>
      </div>

      <div className="flex h-[26px] shrink-0 items-stretch whitespace-nowrap">
        <div className="flex w-[57px] items-center justify-center bg-[#f9a11b] text-[#fff8ea]">File</div>
        <div className="ml-[3px] flex w-[88px] items-center justify-center bg-[#f5f5f5]">3D Model</div>
        <div className="ml-[13px] flex items-center gap-[25.300px] text-[#5d5d5d]">
          <span>Sketch</span><span>Annotate</span><span>Inspect</span><span>Tools</span><span>Manage</span><span>View</span><span>Environments</span><span>Get Started</span><span>Collaborate</span>
        </div>
        <div className="ml-[38px] flex items-center gap-[6px]">
          <svg width="20" height="11" viewBox="0 0 20 11"><rect x=".5" y=".5" width="19" height="10" rx="2" fill="#efefef" stroke="#555" /><path d="M6 8l4-5 4 5z" fill="#222" /></svg>
          <Tri c="#222" />
        </div>
      </div>

      <div className="flex h-[120px] w-[1902px] shrink-0 bg-[#f5f5f5] pt-[4px] text-[#3a3a3a]">
        <Group w="w-[102px]" label="Sketch">
          <div className="relative w-full">
            <Big w="w-full" iconBox="h-[49px]" icon={<SketchIcon />} label={<>Start<br />2D Sketch</>} />
            <div className="absolute left-[87px] top-[66px]"><Tri c="#444" /></div>
          </div>
        </Group>
        <Group w="w-[387px]" label="Create">
          <Big w="w-[60px]" icon={<ExtrudeIcon />} label="Extrude" />
          <Big w="w-[62px]" icon={<RevolveIcon />} label="Revolve" />
          <div className="ml-[2px] flex">
            <Col w="w-[83px]" items={[{ i: 'sweep', t: 'Sweep' }, { i: 'loft', t: 'Loft' }, { i: 'coil', t: 'Coil' }]} />
            <Col w="w-[90px]" items={[{ i: 'emboss', t: 'Emboss' }, { i: 'derive', t: 'Derive' }, { i: 'rib', t: 'Rib' }]} />
            <Col w="w-[80px]" items={[{ i: 'decal', t: 'Decal' }, { i: 'import', t: 'Import' }, { i: 'unwrap', t: 'Unwrap' }]} />
          </div>
        </Group>
        <Group w="w-[463px]" label="Modify" labelExtra={<Tri c="#444" w={9} />}>
          <Big w="w-[48px]" icon={<HoleIcon />} label="Hole" />
          <Big w="w-[62px]" icon={<FilletIcon />} label="Fillet" dd />
          <div className="ml-[2px] flex">
            <Col w="w-[97px]" items={[{ i: 'chamfer', t: 'Chamfer' }, { i: 'shell', t: 'Shell' }, { i: 'draft', t: 'Draft' }]} />
            <Col w="w-[138px]" items={[{ i: 'thread', t: 'Thread' }, { i: 'combine', t: 'Combine' }, { i: 'thicken', t: 'Thicken/ Offset' }]} />
            <Col w="w-[110px]" items={[{ i: 'split', t: 'Split' }, { i: 'direct', t: 'Direct' }, { i: 'delete', t: 'Delete Face' }]} />
          </div>
        </Group>
        <Group w="w-[80px]" label="Explore">
          <Big w="w-full" icon={<ShapeIcon />} label={<>Shape<br />Generator</>} />
        </Group>
        <Group w="w-[156px]" label="Work Features">
          <Big w="w-[68px]" icon={<PlaneIcon />} label="Plane" dd />
          <div className="ml-[2px]">
            <Col w="w-[84px]" gap="gap-[5px]" items={[{ i: 'axis', t: 'Axis', dd: 'ml-[6px]' }, { i: 'point', t: 'Point', dd: 'ml-[6px]' }, { i: 'ucs', t: 'UCS' }]} />
          </div>
        </Group>
        <Group w="w-[68px]" label="Pattern">
          <div className="flex pl-[5px]">
            <Col w="w-[31px]" items={[{ i: 'rectp' }, { i: 'circp' }, { i: 'skp' }]} />
            <Col w="w-[26px]" items={[{ i: 'mirror' }]} />
          </div>
        </Group>
        <Group w="w-[246px]" label="Surface">
          <div className="flex pl-[5px]">
            <Col w="w-[80px]" items={[{ i: 'stitch', t: 'Stitch' }, { i: 'patch', t: 'Patch' }, { i: 'sculpt', t: 'Sculpt' }]} />
            <Col w="w-[129px]" items={[{ i: 'ruled', t: 'Ruled Surface' }, { i: 'trim', t: 'Trim' }, { i: 'extend', t: 'Extend' }]} />
            <Col w="w-[24px]" items={[{ i: 's1' }, { i: 's2' }, { i: 's3' }]} />
          </div>
        </Group>
        <Group w="w-[178px]" label="Plastic Part">
          <div className="flex pl-[6px]">
            <Col w="w-[68px]" items={[{ i: 'grill', t: 'Grill' }, { i: 'boss', t: 'Boss' }, { i: 'rest', t: 'Rest' }]} />
            <Col w="w-[90px]" items={[{ i: 'snap', t: 'Snap Fit' }, { i: 'rulef', t: 'Rule Fillet' }, { i: 'lip', t: 'Lip' }]} />
          </div>
        </Group>
        <Group w="w-[92px]" label="Convert">
          <Big w="w-full" icon={<ConvertIcon />} label={<>Convert to<br />Sheet Metal</>} />
        </Group>
        <div className="ml-[7px] mt-[3px] flex h-[20px] items-center gap-[6px]">
          <svg width="20" height="20" viewBox="0 0 20 20"><circle cx="10" cy="10" r="8.500" fill="#f5f5f5" stroke="#777" strokeWidth="1.500" /><path d="M6 8h8l-4 6z" fill="#666" /></svg>
          <Tri c="#444" />
        </div>
      </div>

      <div className="flex min-h-0 w-[1902px] flex-1">
        <div className="flex w-[309px] shrink-0 flex-col border-r border-[#a9a9a9] bg-[#f5f5f5] pt-px">
          <div className="flex h-[24px] shrink-0 items-center bg-[#d9d9d9] font-['DejaVu_Sans',sans-serif] text-[11.500px] text-[#333]">
            <div className="flex h-full w-[64px] items-center bg-[#f5f5f5] pl-[4px]">
              <span className="pt-[2px]">Model</span>
              <svg width="10" height="10" viewBox="0 0 10 10" className="ml-[9px]"><path d="M1 1l8 8M9 1L1 9" stroke="#555" strokeWidth="1.300" /></svg>
            </div>
            <svg width="11" height="11" viewBox="0 0 11 11" className="ml-[6px]"><path d="M5.500 1v9M1 5.500h9" stroke="#666" strokeWidth="1.600" /></svg>
            <svg width="16" height="16" viewBox="0 0 16 16" className="ml-[181px]"><circle cx="7" cy="7" r="5.500" fill="none" stroke="#666" strokeWidth="1.600" /><path d="M11 11l4 4" stroke="#666" strokeWidth="2" /></svg>
            <svg width="15" height="12" viewBox="0 0 15 12" className="ml-[9px]"><path d="M0 1h15M0 6h15M0 11h15" stroke="#666" strokeWidth="1.800" /></svg>
          </div>
          <div className="relative mt-[2px] flex-1 font-['DejaVu_Sans',sans-serif] text-[11.500px] text-[#1c2233]">
            <div className="flex h-[25px] items-center pl-[3px]">
              <svg width="19" height="19" viewBox="0 0 19 19"><path d="M1 6l5-5h12v13l-4 4H1z" fill="#5dade2" /><path d="M14 6l4-5v13l-4 4z" fill="#3d8ec9" /><path d="M1 6h13l4-5" fill="none" stroke="#9ed0f2" /></svg>
              <span className="ml-[4px]">Part.ipt</span>
            </div>
            <div className="absolute left-[10px] top-[24px] h-[338px] border-l border-dotted border-[#888]" />
            {tree.map(([k, t]) => (
              <div key={t} className="relative flex h-[25px] items-center">
                <div className="absolute left-[10px] top-[12px] w-[12px] border-t border-dotted border-[#888]" />
                {k !== 'end' && <div className="absolute left-[5px] top-[7px] bg-[#f5f5f5]"><svg width="11" height="11" viewBox="0 0 11 11" className="block"><path d="M5.500 0v11M0 5.500h11" stroke="#8a8a8a" strokeWidth="2" /></svg></div>}
                <div className="relative ml-[22px] w-[24px]"><TreeIcon k={k} /></div>
                <span>{t}</span>
              </div>
            ))}
          </div>
        </div>

        <div className="flex min-w-0 flex-1 flex-col">
          <div className="relative flex-1 overflow-hidden bg-[#cad6e7]">
            <PartDrawing />
            <Cube />
            <NavBar />
            <Triad />
            <div className="absolute right-[1px] top-[6px] flex items-center gap-[10px]">
              <div className="mt-[7px] h-[2px] w-[8px] bg-[#333]" />
              <svg width="11" height="11" viewBox="0 0 11 11"><rect x=".5" y=".5" width="10" height="10" fill="none" stroke="#333" /><path d="M0 1.500h11M5.500 1v10M5.500 5.500h5" stroke="#333" strokeWidth="1.200" /></svg>
              <svg width="12" height="12" viewBox="0 0 12 12"><path d="M1 1l10 10M11 1L1 11" stroke="#333" strokeWidth="1.600" /></svg>
            </div>
          </div>
          <div className="flex h-[30px] shrink-0 items-stretch border-r border-black bg-[#d9d9d9] text-[#5d5d5d]">
            <div className="flex w-[34px] items-center justify-center">
              <svg width="19" height="19" viewBox="0 0 20 20"><path d="M10 1L0 10h3v9h14v-9h3z" fill="#f5f5f5" stroke="#555" strokeWidth="1.400" /><rect x="8" y="12" width="4" height="7" fill="#d9d9d9" stroke="#555" /></svg>
            </div>
            <div className="flex w-[92px] items-center justify-center gap-[6px] border-b-4 border-[#35a7e0] bg-[#f5f5f5] pl-[2px] text-[#2a9bd8]">
              <span>Part9.ipt</span>
              <svg width="11" height="11" viewBox="0 0 11 11"><path d="M1 1l9 9M10 1l-9 9" stroke="#777" strokeWidth="1.800" /></svg>
            </div>
            <span className="ml-[10px] flex items-center">Assembly2.iam</span>
            <span className="ml-[20px] flex items-center">Assembly2.iam</span>
            <svg width="18" height="15" viewBox="0 0 18 15" className="ml-auto mr-[6px] self-center"><path d="M0 2h18M0 7.500h18M0 13h18" stroke="#666" strokeWidth="2.200" /></svg>
          </div>
        </div>
      </div>

      <div className="mb-[3px] flex h-[30px] w-[1902px] shrink-0 items-center bg-[#eeeeee]">
        <span className="ml-[1px]">Ready</span>
        <div className="ml-auto flex h-[28px] items-stretch">
          <div className="flex w-[40px] items-center border-l border-[#d5d5d5] pl-[12px]">1</div>
          <div className="flex w-[38px] items-center border-l border-[#d5d5d5] pl-[9px]">12</div>
          <div className="flex w-[24px] items-end justify-end border-l border-[#d5d5d5] pb-[2px] pr-[2px]">
            <svg width="12" height="12" viewBox="0 0 12 12"><path d="M8 0h3v3H8zM4 4h3v3H4zM8 4h3v3H8zM0 8h3v3H0zM4 8h3v3H4zM8 8h3v3H8z" fill="#bdbdbd" /></svg>
          </div>
        </div>
      </div>
    </div>
  );
}
